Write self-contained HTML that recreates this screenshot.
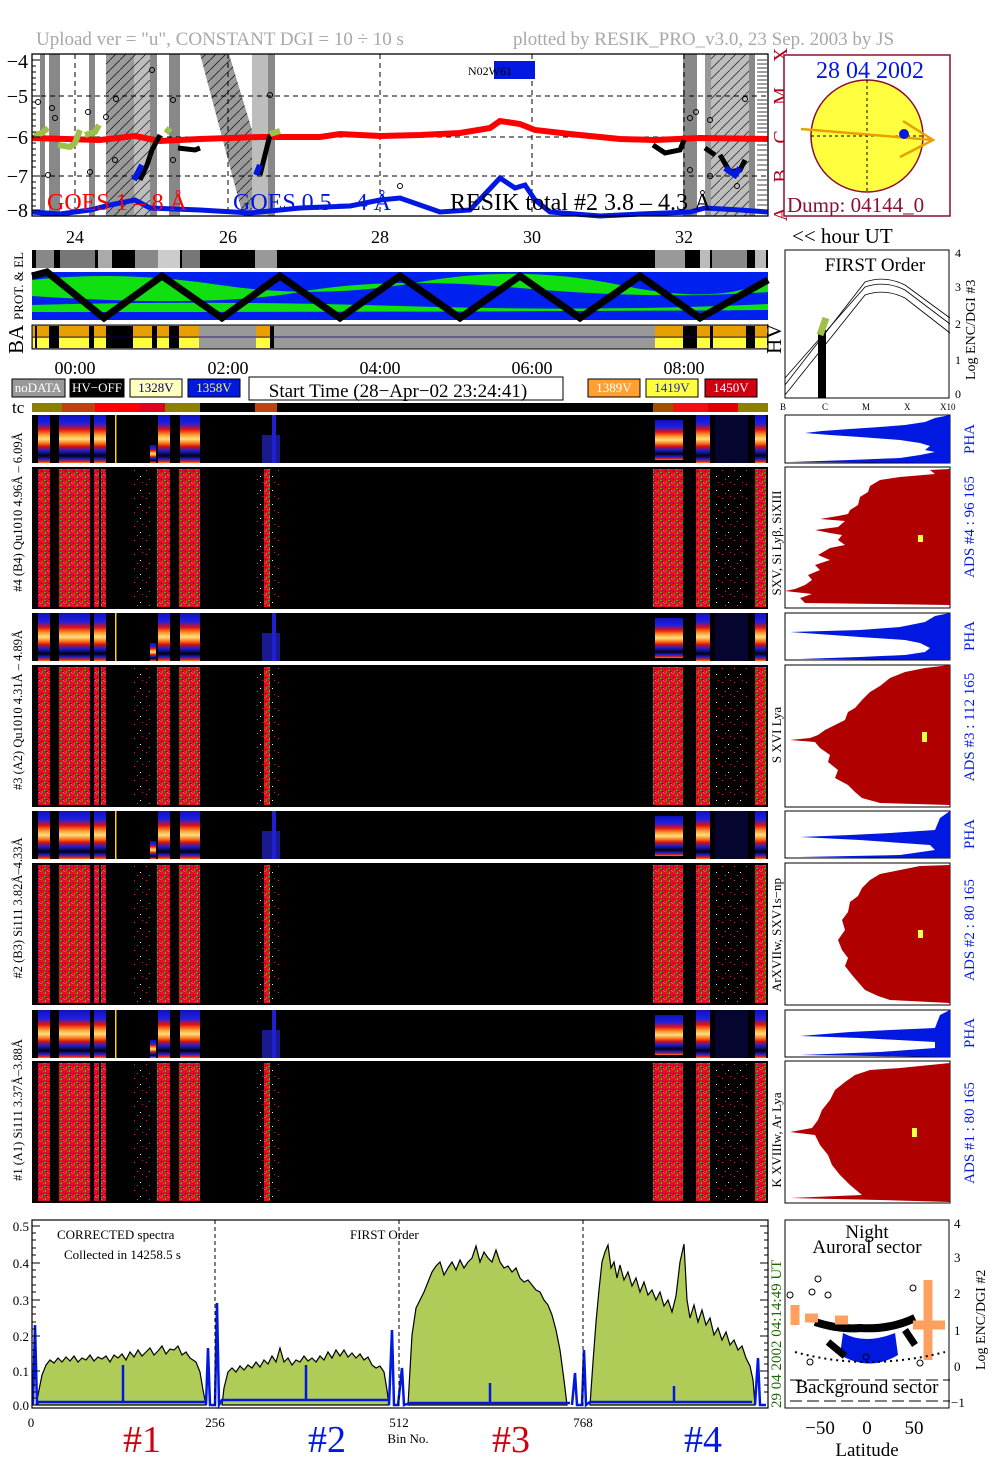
<!DOCTYPE html>
<html><head><meta charset="utf-8"><style>
html,body{margin:0;padding:0;background:#fff;}
svg{display:block;font-family:"Liberation Serif",serif;}
</style></head><body>
<svg width="1004" height="1477" viewBox="0 0 1004 1477" xmlns="http://www.w3.org/2000/svg">
<defs>
<pattern id="hatch" width="10" height="10" patternUnits="userSpaceOnUse"><rect width="10" height="10" fill="#bdbdbd"/><path d="M0 10L10 0" stroke="#333" stroke-width="0.8"/></pattern>
<pattern id="hatchw" width="10" height="10" patternUnits="userSpaceOnUse"><rect width="10" height="10" fill="#9a9a9a"/><path d="M0 10L10 0" stroke="#222" stroke-width="0.8"/></pattern>
<pattern id="spk" width="8" height="8" patternUnits="userSpaceOnUse"><rect width="8" height="8" fill="#e01020"/><rect x="0" y="0" width="2" height="1" fill="#10c010"/><rect x="5" y="1" width="1" height="2" fill="#20d020"/><rect x="3" y="2" width="2" height="1" fill="#e020a0"/><rect x="4" y="5" width="2" height="1" fill="#30b010"/><rect x="1" y="4" width="1" height="1" fill="#000"/><rect x="2" y="6" width="1" height="2" fill="#10c010"/><rect x="6" y="3" width="1" height="1" fill="#a000a0"/><rect x="7" y="7" width="1" height="1" fill="#ff60c0"/><rect x="0" y="6" width="1" height="1" fill="#c02080"/><rect x="6" y="6" width="1" height="1" fill="#000"/></pattern>
<pattern id="spks" width="12" height="14" patternUnits="userSpaceOnUse"><rect width="12" height="14" fill="#000"/><rect x="2" y="3" width="1" height="1" fill="#f02040"/><rect x="8" y="9" width="1" height="1" fill="#fff"/><rect x="5" y="12" width="1" height="1" fill="#e020a0"/><rect x="10" y="1" width="1" height="1" fill="#f01010"/></pattern>
<linearGradient id="pha" x1="0" y1="0" x2="0" y2="1">
<stop offset="0" stop-color="#1010c0"/><stop offset="0.18" stop-color="#2020e0"/><stop offset="0.3" stop-color="#e01010"/><stop offset="0.42" stop-color="#ffa030"/><stop offset="0.5" stop-color="#ffe080"/><stop offset="0.58" stop-color="#ff8020"/><stop offset="0.66" stop-color="#d01010"/><stop offset="0.74" stop-color="#2020d0"/><stop offset="0.85" stop-color="#000010"/><stop offset="0.92" stop-color="#2020d0"/><stop offset="0.97" stop-color="#e02010"/><stop offset="1" stop-color="#ff8020"/></linearGradient>
<g id="phag">
<rect x="32" y="0" width="736" height="48" fill="#000"/>
<rect x="38" y="0" width="12" height="48" fill="url(#pha)"/>
<rect x="59" y="0" width="31" height="48" fill="url(#pha)"/>
<rect x="94" y="0" width="12" height="48" fill="url(#pha)"/>
<rect x="150" y="30" width="6" height="18" fill="url(#pha)"/>
<rect x="158" y="0" width="12" height="48" fill="url(#pha)"/>
<rect x="180" y="0" width="20" height="48" fill="url(#pha)"/>
<rect x="115" y="0" width="1.5" height="48" fill="#ffd000"/>
<rect x="262" y="20" width="18" height="28" fill="#1a1a90"/>
<rect x="272" y="0" width="4" height="48" fill="#2020d0"/>
<rect x="655" y="5" width="28" height="40" fill="url(#pha)"/>
<rect x="696" y="0" width="14" height="48" fill="url(#pha)"/>
<rect x="715" y="0" width="33" height="48" fill="#050530"/>
<rect x="755" y="0" width="11" height="48" fill="url(#pha)"/>
</g>
<g id="bigg">
<rect x="32" y="0" width="736" height="142" fill="#000"/>
<rect x="38" y="2" width="12" height="138" fill="url(#spk)"/>
<rect x="59" y="2" width="31" height="138" fill="url(#spk)"/>
<rect x="94" y="2" width="5" height="138" fill="url(#spk)"/>
<rect x="101" y="2" width="5" height="138" fill="url(#spk)"/>
<rect x="132" y="2" width="20" height="138" fill="url(#spks)"/>
<rect x="157" y="2" width="13" height="138" fill="url(#spk)"/>
<rect x="179" y="2" width="21" height="138" fill="url(#spk)"/>
<rect x="255" y="2" width="25" height="138" fill="url(#spks)"/>
<rect x="264" y="2" width="6" height="138" fill="url(#spk)"/>
<rect x="653" y="2" width="30" height="138" fill="url(#spk)"/>
<rect x="696" y="2" width="14" height="138" fill="url(#spk)"/>
<rect x="715" y="2" width="33" height="138" fill="url(#spks)"/>
<rect x="755" y="2" width="11" height="138" fill="url(#spk)"/>
</g>
</defs>

<!-- Title -->
<text x="36" y="45" font-size="19" fill="#a8a8a8">Upload ver = "u", CONSTANT  DGI =  10 ÷  10 s</text>
<text x="513" y="45" font-size="19" fill="#a8a8a8">plotted by RESIK_PRO_v3.0, 23 Sep. 2003 by JS</text>

<!-- Top plot -->
<g>
<rect x="32" y="54" width="736" height="162" fill="#fff"/>
<rect x="40" y="54" width="5" height="162" fill="#888"/>
<rect x="49" y="54" width="11" height="162" fill="#888"/>
<rect x="89" y="54" width="6" height="162" fill="#888"/>
<rect x="106" y="54" width="29" height="162" fill="url(#hatchw)"/>
<rect x="134" y="54" width="16" height="162" fill="url(#hatch)"/>
<rect x="150" y="54" width="7" height="162" fill="#888"/>
<rect x="169" y="54" width="11" height="162" fill="#888"/>
<polygon points="200,54 229,54 255,140 255,216 243,216" fill="url(#hatchw)"/>
<rect x="252" y="54" width="16" height="162" fill="#bdbdbd"/>
<rect x="268" y="54" width="7" height="162" fill="#888"/>
<rect x="683" y="54" width="14" height="162" fill="#888"/>
<rect x="705" y="54" width="50" height="162" fill="url(#hatch)"/>
<rect x="705" y="54" width="6" height="162" fill="#999"/>
<rect x="749" y="54" width="6" height="162" fill="#888"/>
<rect x="755" y="54" width="12" height="162" fill="#fff"/>
<g stroke="#000" stroke-width="0.7"><path d="M757 60H767M757 64H767M757 68H767M757 72H767M757 76H767M757 80H767M757 84H767M757 88H767M757 92H767M757 100H767M757 104H767M757 108H767M757 112H767M757 116H767M757 120H767M757 124H767M757 128H767M757 132H767M757 145H767M757 150H767M757 155H767M757 160H767M757 165H767M757 170H767M757 180H767M757 185H767M757 190H767M757 195H767M757 200H767M757 205H767"/></g>
<g stroke="#000" stroke-width="1" stroke-dasharray="5,4" fill="none">
<path d="M32 96H768M32 137H768M32 176H768"/>
<path d="M75 54V216M228 54V216M380 54V216M532 54V216M684 54V216"/>
</g>
<path d="M32 138 L100 140 L135 136 L160 141 L200 139 L260 137 L320 137 L340 134 L380 136 L420 135 L460 133 L490 128 L500 121 L520 124 L535 130 L570 134 L620 139 L655 140 L700 138 L768 139" stroke="#f00" stroke-width="6" fill="none"/>
<path d="M32 212 L60 214 L90 210 L110 205 L135 200 L150 208 L200 210 L250 213 L300 208 L350 206 L380 200 L400 198 L420 205 L440 212 L470 210 L500 178 L515 188 L525 185 L535 200 L550 212 L600 216 L640 214 L690 212 L705 208 L740 210 L768 212" stroke="#0018e0" stroke-width="5" fill="none"/>
<path d="M140 180 L147 165 L152 150 L160 135 M260 175 L265 155 L270 135" stroke="#000" stroke-width="5" fill="none"/>
<path d="M134 180 L142 165 M256 175 L260 165" stroke="#0018e0" stroke-width="6" fill="none"/>
<path d="M178 148 L195 150 L200 148 M653 145 L665 153 L680 150 L684 140 M705 148 L715 155 M720 155 L730 172 L740 170 L745 160" stroke="#000" stroke-width="5" fill="none"/>
<path d="M725 168 L735 175 L740 168" stroke="#0018e0" stroke-width="6" fill="none"/>
<path d="M34 135 L42 133 L48 128 M58 145 L70 147 L75 143 L80 130 M85 135 L95 132 L99 125 M166 133 L170 128 M270 134 L280 131" stroke="#9dc04a" stroke-width="6" fill="none"/>
<g fill="none" stroke="#000" stroke-width="1"><circle cx="38" cy="102" r="2.5"/><circle cx="52" cy="108" r="2.5"/><circle cx="55" cy="118" r="2.5"/><circle cx="48" cy="175" r="2.5"/><circle cx="88" cy="112" r="2.5"/><circle cx="90" cy="172" r="2.5"/><circle cx="106" cy="117" r="2.5"/><circle cx="116" cy="99" r="2.5"/><circle cx="115" cy="160" r="2.5"/><circle cx="152" cy="70" r="2.5"/><circle cx="173" cy="100" r="2.5"/><circle cx="173" cy="160" r="2.5"/><circle cx="270" cy="95" r="2.5"/><circle cx="400" cy="186" r="2.5"/><circle cx="690" cy="118" r="2.5"/><circle cx="696" cy="112" r="2.5"/><circle cx="690" cy="170" r="2.5"/><circle cx="710" cy="120" r="2.5"/><circle cx="710" cy="176" r="2.5"/><circle cx="745" cy="99" r="2.5"/><circle cx="737" cy="186" r="2.5"/></g>
<rect x="494" y="61" width="41" height="18" fill="#0018e0"/>
<text x="468" y="75" font-size="12" fill="#000">N02W61</text>
<text x="47" y="210" font-size="24" fill="#f00">GOES 1 – 8 Å</text>
<text x="233" y="210" font-size="24" fill="#0018e0">GOES 0.5 – 4 Å</text>
<text x="450" y="210" font-size="24" fill="#000">RESIK total #2  3.8 – 4.3 Å</text>
<rect x="32" y="54" width="736" height="162" fill="none" stroke="#000" stroke-width="1.3"/>
<g stroke="#000" stroke-width="1"><path d="M32 60H40M32 96H40M32 137H40M32 176H40M32 210H40"/><path d="M32 66H36M32 72H36M32 78H36M32 84H36M32 90H36M32 102H36M32 108H36M32 114H36M32 120H36M32 126H36M32 132H36M32 143H36M32 149H36M32 155H36M32 161H36M32 167H36M32 182H36M32 188H36M32 194H36M32 200H36M32 206H36"/></g>
<g font-size="20" text-anchor="end"><text x="28" y="68">−4</text><text x="28" y="103">−5</text><text x="28" y="144">−6</text><text x="28" y="183">−7</text><text x="28" y="217">−8</text></g>
<g font-size="20" fill="#b00020" text-anchor="middle">
<text transform="translate(781,55) rotate(-90)" y="6">X</text>
<text transform="translate(781,96) rotate(-90)" y="6">M</text>
<text transform="translate(781,137) rotate(-90)" y="6">C</text>
<text transform="translate(781,176) rotate(-90)" y="6">B</text>
<text transform="translate(781,214) rotate(-90)" y="6">A</text>
</g>
<g font-size="18" text-anchor="middle"><text x="75" y="243">24</text><text x="228" y="243">26</text><text x="380" y="243">28</text><text x="532" y="243">30</text><text x="684" y="243">32</text></g>
</g>

<!-- Sun box -->
<rect x="784" y="55" width="166" height="161" fill="#fff" stroke="#8b1030" stroke-width="1.5"/>
<circle cx="867" cy="136" r="56" fill="#ffff40" stroke="#8b1030" stroke-width="1.5"/>
<path d="M867 80V192M811 136H930" stroke="#000" stroke-width="1" stroke-dasharray="3,3"/>
<path d="M801 129 L933 140 M903 121 L933 140 L900 157" stroke="#e8a000" stroke-width="2.5" fill="none"/>
<circle cx="904" cy="134" r="5" fill="#0018e0"/>
<text x="870" y="78" font-size="24" fill="#0018e0" text-anchor="middle">28 04 2002</text>
<text x="787" y="212" font-size="21" fill="#8b1030">Dump: 04144_0</text>
<text x="792" y="243" font-size="21">&lt;&lt; hour UT</text>

<!-- Strips -->
<rect x="32" y="250" width="736" height="18" fill="#000"/>
<rect x="36" y="250" width="18" height="18" fill="#888"/><rect x="60" y="250" width="35" height="18" fill="#777"/><rect x="98" y="250" width="14" height="18" fill="#aaa"/><rect x="135" y="250" width="28" height="18" fill="#888"/><rect x="158" y="250" width="22" height="18" fill="#ccc"/><rect x="182" y="250" width="18" height="18" fill="#777"/><rect x="255" y="250" width="22" height="18" fill="#999"/>
<rect x="655" y="250" width="30" height="18" fill="#999"/><rect x="700" y="250" width="10" height="18" fill="#bbb"/><rect x="712" y="250" width="35" height="18" fill="#888"/><rect x="755" y="250" width="11" height="18" fill="#bbb"/>
<rect x="32" y="272" width="736" height="48" fill="#0020f0"/>
<path d="M32 280 Q120 270 220 285 T420 282 T620 285 T768 280 V292 Q650 300 520 288 T300 292 T32 296Z" fill="#10e010"/>
<path d="M32 305 Q200 300 400 306 T768 304 V310 Q500 312 32 312Z" fill="#10e010"/>
<path d="M32 276 L47 272 L104 318 L162 276 L222 318 L280 276 L340 318 L400 276 L460 318 L520 276 L580 318 L640 276 L700 318 L768 280" stroke="#000" stroke-width="7" fill="none"/>
<rect x="32" y="325" width="736" height="24" fill="#999" stroke="#000" stroke-width="1"/>
<g>
<rect x="33" y="326" width="166" height="11" fill="#e8a000"/><rect x="33" y="338" width="166" height="10" fill="#ffff40"/>
<rect x="256" y="326" width="14" height="22" fill="#e8a000"/><rect x="256" y="338" width="14" height="10" fill="#ffff40"/>
<rect x="655" y="326" width="112" height="11" fill="#e8a000"/><rect x="655" y="338" width="112" height="10" fill="#ffff40"/>
<rect x="35" y="326" width="2" height="22" fill="#000"/><rect x="49" y="326" width="10" height="22" fill="#000"/><rect x="89" y="326" width="5" height="22" fill="#000"/><rect x="106" y="326" width="27" height="22" fill="#000"/><rect x="152" y="326" width="5" height="22" fill="#000"/><rect x="169" y="326" width="10" height="22" fill="#000"/><rect x="270" y="326" width="4" height="22" fill="#000"/>
<rect x="683" y="326" width="14" height="22" fill="#000"/><rect x="710" y="326" width="3" height="22" fill="#000"/><rect x="746" y="326" width="9" height="22" fill="#000"/>
<path d="M32 337H768" stroke="#000060" stroke-width="0.8"/>
</g>
<text transform="translate(23,320) rotate(-90)" font-size="13">PROT. &amp; EL</text>
<text transform="translate(23,354) rotate(-90)" font-size="21">BA</text>
<text transform="translate(781,354) rotate(-90)" font-size="21">HV</text>
<g font-size="18" text-anchor="middle"><text x="75" y="374">00:00</text><text x="228" y="374">02:00</text><text x="380" y="374">04:00</text><text x="532" y="374">06:00</text><text x="684" y="374">08:00</text></g>

<!-- Legend -->
<g font-size="13" text-anchor="middle">
<rect x="12" y="379" width="53" height="18" fill="#999" stroke="#000"/><text x="38" y="392" fill="#fff">noDATA</text>
<rect x="70" y="379" width="54" height="18" fill="#000" stroke="#000"/><text x="97" y="392" fill="#fff">HV−OFF</text>
<rect x="130" y="379" width="52" height="18" fill="#ffffc0" stroke="#000"/><text x="156" y="392" fill="#000060">1328V</text>
<rect x="188" y="379" width="52" height="18" fill="#0018e0" stroke="#000"/><text x="214" y="392" fill="#ffff40">1358V</text>
<rect x="249" y="377" width="314" height="23" fill="#fff" stroke="#000"/><text x="398" y="397" font-size="19">Start Time (28−Apr−02 23:24:41)</text>
<rect x="588" y="379" width="52" height="18" fill="#ffa030" stroke="#000"/><text x="614" y="392" fill="#fff">1389V</text>
<rect x="646" y="379" width="52" height="18" fill="#ffff40" stroke="#000"/><text x="672" y="392" fill="#2020c0">1419V</text>
<rect x="705" y="379" width="52" height="18" fill="#d00010" stroke="#000"/><text x="731" y="392" fill="#fff">1450V</text>
</g>
<text x="12" y="413" font-size="17">tc</text>
<rect x="32" y="403" width="736" height="9" fill="#000"/>
<rect x="32" y="403" width="30" height="9" fill="#8b8000"/><rect x="62" y="403" width="33" height="9" fill="#c04010"/><rect x="95" y="403" width="45" height="9" fill="#f00"/><rect x="140" y="403" width="25" height="9" fill="#e00020"/><rect x="165" y="403" width="35" height="9" fill="#8b8000"/><rect x="255" y="403" width="22" height="9" fill="#c04010"/>
<rect x="653" y="403" width="20" height="9" fill="#a05000"/><rect x="673" y="403" width="35" height="9" fill="#f01010"/><rect x="708" y="403" width="30" height="9" fill="#e00000"/><rect x="738" y="403" width="30" height="9" fill="#8b8000"/>

<!-- Spectrogram panels -->
<use href="#phag" transform="translate(0,415)"/>
<use href="#bigg" transform="translate(0,467)"/>
<use href="#phag" transform="translate(0,613)"/>
<use href="#bigg" transform="translate(0,665)"/>
<use href="#phag" transform="translate(0,811)"/>
<use href="#bigg" transform="translate(0,863)"/>
<use href="#phag" transform="translate(0,1010)"/>
<use href="#bigg" transform="translate(0,1061)"/>

<g font-size="12.5" text-anchor="middle">
<text transform="translate(22,512) rotate(-90)">#4 (B4) Qu1010 4.96Å – 6.09Å</text>
<text transform="translate(22,710) rotate(-90)">#3 (A2) Qu1010 4.31Å – 4.89Å</text>
<text transform="translate(22,908) rotate(-90)">#2 (B3) Si111 3.82Å–4.33Å</text>
<text transform="translate(22,1110) rotate(-90)">#1 (A1) Si111 3.37Å–3.88Å</text>
</g>

<!-- Right: first order panel -->
<rect x="785" y="250" width="164" height="148" fill="#fff" stroke="#000"/>
<text x="875" y="271" font-size="19" text-anchor="middle">FIRST Order</text>
<g fill="none" stroke="#000" stroke-width="0.8">
<path d="M785 385 L865 282 Q885 275 905 285 L950 318"/>
<path d="M785 378 L865 287 Q885 280 905 290 L950 324"/>
<path d="M785 395 L865 295 Q885 288 905 298 L950 333"/>
</g>
<path d="M822 330 L822 398" stroke="#000" stroke-width="8"/>
<path d="M820 335 L826 318" stroke="#9dc04a" stroke-width="7"/>
<g font-size="12"><text x="955" y="257">4</text><text x="955" y="291">3</text><text x="955" y="328">2</text><text x="955" y="364">1</text><text x="955" y="398">0</text></g>
<text transform="translate(975,380) rotate(-90)" font-size="14">Log ENC/DGI #3</text>
<g font-size="9"><text x="780" y="410">B</text><text x="822" y="410">C</text><text x="862" y="410">M</text><text x="904" y="410">X</text><text x="940" y="410">X10</text></g>

<!-- Right histograms -->
<g stroke="#000" stroke-width="1">
<rect x="785" y="415" width="165" height="48" fill="#fff"/>
<polygon points="950,415 935,418 925,422 905,425 880,427 850,429 822,431 805,433 830,435 860,437 900,440 920,443 930,446 925,450 935,452 920,455 900,458 850,460 790,462 950,463" fill="#0018e0" stroke="none"/>
<rect x="785" y="467" width="165" height="141" fill="#fff"/>
<polygon points="950,469 930,470 935,474 900,477 880,480 870,486 868,492 860,497 858,505 850,510 848,514 838,516 820,519 845,521 838,527 815,530 830,533 842,535 838,540 845,545 830,548 818,555 830,560 815,565 820,570 808,575 812,580 805,585 795,589 785,591 812,594 800,598 805,603 950,605" fill="#b00000" stroke="none"/>
<rect x="785" y="613" width="165" height="47" fill="#fff"/>
<polygon points="950,613 935,616 925,622 900,627 860,630 790,632 860,637 905,640 920,643 930,648 925,652 905,655 860,657 800,659 950,660" fill="#0018e0" stroke="none"/>
<rect x="785" y="665" width="165" height="142" fill="#fff"/>
<polygon points="950,665 925,668 905,672 890,678 880,686 870,692 862,700 855,708 848,712 845,720 835,725 825,730 818,735 810,738 790,740 815,742 820,748 830,755 828,762 838,770 835,778 848,785 855,792 862,798 880,803 950,805" fill="#b00000" stroke="none"/>
<rect x="785" y="811" width="165" height="47" fill="#fff"/>
<polygon points="950,811 940,818 935,830 890,833 850,835 800,837 860,840 930,845 935,850 900,855 800,857 950,858" fill="#0018e0" stroke="none"/>
<rect x="785" y="863" width="165" height="142" fill="#fff"/>
<polygon points="950,865 920,866 900,870 880,874 870,880 862,888 858,896 850,902 848,912 842,920 845,930 838,940 842,950 848,958 845,966 852,975 858,982 865,990 878,996 890,1000 950,1003" fill="#b00000" stroke="none"/>
<rect x="785" y="1010" width="165" height="47" fill="#fff"/>
<polygon points="950,1010 940,1015 935,1028 890,1030 850,1032 800,1036 860,1038 935,1042 935,1048 880,1052 800,1055 950,1057" fill="#0018e0" stroke="none"/>
<rect x="785" y="1061" width="165" height="142" fill="#fff"/>
<polygon points="950,1063 900,1068 870,1070 855,1075 845,1082 835,1090 830,1100 822,1110 818,1120 812,1128 790,1132 815,1135 820,1145 828,1155 832,1165 840,1175 850,1185 862,1195 790,1198 880,1200 950,1202" fill="#b00000" stroke="none"/>
</g>
<rect x="918" y="535" width="5" height="7" fill="#ffff40"/>
<rect x="922" y="732" width="5" height="10" fill="#ffff40"/>
<rect x="918" y="930" width="5" height="8" fill="#ffff40"/>
<rect x="912" y="1128" width="5" height="9" fill="#ffff40"/>
<g font-size="13" text-anchor="middle">
<text transform="translate(781,543) rotate(-90)">SXV, Si Lyβ, SiXIII</text>
<text transform="translate(781,735) rotate(-90)">S XVI Lya</text>
<text transform="translate(781,935) rotate(-90)">ArXVIIw, SXV1s−np</text>
<text transform="translate(781,1140) rotate(-90)">K XVIIIw, Ar Lya</text>
</g>
<g font-size="15" fill="#0018e0" text-anchor="middle">
<text transform="translate(974,439) rotate(-90)">PHA</text>
<text transform="translate(974,527) rotate(-90)">ADS #4 :   96 165</text>
<text transform="translate(974,636) rotate(-90)">PHA</text>
<text transform="translate(974,727) rotate(-90)">ADS #3 :  112 165</text>
<text transform="translate(974,834) rotate(-90)">PHA</text>
<text transform="translate(974,930) rotate(-90)">ADS #2 :   80 165</text>
<text transform="translate(974,1033) rotate(-90)">PHA</text>
<text transform="translate(974,1133) rotate(-90)">ADS #1 :   80 165</text>
</g>

<!-- Bottom spectrum -->
<rect x="32" y="1220" width="736" height="188" fill="#fff"/>
<g fill="#b0cc58" stroke="#000" stroke-width="1.2">
<path d="M36 1405 L38 1395 L42 1375 L46 1365 L50 1360 L54 1363 L58 1358 L62 1362 L66 1357 L70 1361 L74 1356 L78 1362 L82 1358 L86 1360 L90 1355 L94 1361 L98 1357 L102 1359 L106 1356 L110 1362 L114 1355 L118 1358 L122 1354 L126 1360 L130 1352 L134 1357 L138 1350 L142 1356 L146 1352 L150 1348 L154 1355 L158 1351 L162 1346 L166 1354 L170 1349 L174 1350 L178 1346 L182 1355 L186 1352 L190 1358 L196 1362 L200 1372 L203 1390 L206 1405Z"/>
<path d="M222 1405 L224 1388 L228 1372 L232 1368 L236 1372 L240 1366 L244 1370 L248 1365 L252 1368 L256 1362 L260 1367 L264 1360 L268 1364 L272 1356 L276 1362 L280 1348 L284 1362 L288 1358 L292 1365 L296 1360 L300 1362 L304 1356 L308 1361 L312 1358 L316 1362 L320 1356 L324 1360 L328 1352 L332 1358 L336 1350 L340 1356 L344 1350 L348 1357 L352 1353 L356 1358 L360 1354 L364 1360 L368 1357 L372 1365 L376 1368 L380 1366 L384 1372 L387 1390 L389 1405Z"/>
<path d="M408 1405 L410 1370 L412 1335 L416 1308 L420 1300 L424 1292 L428 1282 L432 1272 L436 1266 L440 1262 L444 1275 L448 1268 L452 1262 L456 1270 L460 1260 L464 1268 L468 1262 L472 1258 L476 1246 L480 1262 L484 1252 L488 1258 L492 1262 L496 1250 L500 1262 L504 1268 L508 1266 L512 1272 L516 1268 L520 1278 L524 1282 L528 1280 L532 1285 L536 1290 L540 1292 L544 1300 L548 1305 L552 1315 L556 1330 L560 1350 L564 1380 L567 1405Z"/>
<path d="M590 1405 L593 1362 L596 1322 L599 1290 L602 1262 L605 1252 L608 1245 L611 1268 L614 1262 L617 1278 L620 1265 L624 1280 L628 1272 L632 1286 L636 1278 L640 1292 L644 1282 L648 1295 L652 1290 L656 1300 L660 1292 L664 1306 L668 1300 L672 1312 L676 1296 L680 1262 L684 1244 L687 1300 L690 1318 L694 1305 L698 1322 L702 1310 L706 1325 L710 1318 L714 1335 L718 1328 L722 1340 L726 1332 L730 1345 L734 1340 L738 1350 L742 1346 L746 1358 L750 1366 L753 1380 L755 1405Z"/>
</g>
<g stroke="#0018e0" stroke-width="2.5" fill="none">
<path d="M33 1405 L35 1325 L37 1405 L38 1402 L205 1402 M123 1402 V1365 M206 1405 L208 1348 L210 1405 L215 1405 L217 1303 L219 1405 L222 1400 L388 1400 M306 1400 V1365 M389 1405 L392 1330 L394 1405 L398 1405 L402 1368 L404 1405 L410 1403 L570 1403 M490 1403 V1383 M572 1405 L575 1373 L577 1405 L582 1405 L584 1350 L586 1405 L590 1402 L752 1402 M674 1402 V1386 M755 1405 L758 1358 L760 1405 L766 1405"/>
</g>
<path d="M215 1220V1408M399 1220V1408M583 1220V1408" stroke="#000" stroke-dasharray="4,3" stroke-width="1"/>
<rect x="32" y="1220" width="736" height="188" fill="none" stroke="#000" stroke-width="1.2"/>
<g stroke="#000" stroke-width="1"><path d="M32 1226H40M32 1263H40M32 1300H40M32 1336H40M32 1371H40M32 1405H40"/><path d="M32 1233H36M32 1240H36M32 1248H36M32 1255H36M32 1270H36M32 1277H36M32 1285H36M32 1292H36M32 1307H36M32 1314H36M32 1322H36M32 1329H36M32 1343H36M32 1350H36M32 1357H36M32 1364H36M32 1378H36M32 1385H36M32 1392H36M32 1398H36"/>
<path d="M760 1226H768M760 1263H768M760 1300H768M760 1336H768M760 1371H768M764 1233H768M764 1240H768M764 1248H768M764 1255H768M764 1270H768M764 1277H768M764 1285H768M764 1292H768M764 1307H768M764 1314H768M764 1322H768M764 1329H768M764 1343H768M764 1350H768M764 1357H768M764 1364H768M764 1378H768M764 1385H768M764 1392H768"/></g>
<g font-size="13" text-anchor="end"><text x="29" y="1231">0.5</text><text x="29" y="1268">0.4</text><text x="29" y="1305">0.3</text><text x="29" y="1341">0.2</text><text x="29" y="1376">0.1</text><text x="29" y="1410">0.0</text></g>
<text x="57" y="1239" font-size="13">CORRECTED spectra</text>
<text x="64" y="1259" font-size="13">Collected in 14258.5 s</text>
<text x="350" y="1239" font-size="13">FIRST Order</text>
<g font-size="13" text-anchor="middle"><text x="31" y="1427">0</text><text x="215" y="1427">256</text><text x="399" y="1427">512</text><text x="583" y="1427">768</text><text x="408" y="1443">Bin No.</text></g>
<g font-size="38" text-anchor="middle"><text x="142" y="1452" fill="#d00010">#1</text><text x="327" y="1452" fill="#0018e0">#2</text><text x="511" y="1452" fill="#d00010">#3</text><text x="703" y="1452" fill="#0018e0">#4</text></g>
<text transform="translate(781,1408) rotate(-90)" font-size="15" fill="#1a6b00">29 04 2002    04:14:49 UT</text>

<!-- Latitude panel -->
<rect x="785" y="1220" width="164" height="188" fill="#fff" stroke="#000"/>
<text x="867" y="1238" font-size="19" text-anchor="middle">Night</text>
<text x="867" y="1253" font-size="19" text-anchor="middle">Auroral sector</text>
<path d="M790 1380H950M790 1401H950" stroke="#000" stroke-dasharray="12,5"/>
<path d="M843 1333 Q865 1345 895 1333 L898 1355 Q870 1372 840 1355Z" fill="#0018e0"/>
<path d="M815 1322 Q840 1330 860 1328 Q890 1330 915 1318" stroke="#000" stroke-width="8" fill="none"/>
<path d="M828 1342 L845 1356 M905 1330 L915 1345" stroke="#000" stroke-width="7"/>
<path d="M795 1305 L795 1325 M805 1318 H818 M835 1320 H848 M928 1280 V1360 M913 1325 H945" stroke="#ffa060" stroke-width="9"/>
<path d="M795 1352 Q867 1372 945 1352" stroke="#000" stroke-dasharray="2,4" stroke-width="2" fill="none"/>
<g fill="none" stroke="#000"><circle cx="818" cy="1279" r="3"/><circle cx="812" cy="1292" r="3"/><circle cx="790" cy="1295" r="3"/><circle cx="828" cy="1295" r="3"/><circle cx="913" cy="1288" r="3"/><circle cx="810" cy="1362" r="3"/><circle cx="920" cy="1363" r="3"/><circle cx="866" cy="1357" r="3"/></g>
<text x="867" y="1393" font-size="19" text-anchor="middle">Background sector</text>
<g font-size="13"><text x="954" y="1228">4</text><text x="954" y="1262">3</text><text x="954" y="1298">2</text><text x="954" y="1335">1</text><text x="954" y="1371">0</text><text x="951" y="1407">−1</text></g>
<text transform="translate(985,1370) rotate(-90)" font-size="14">Log ENC/DGI #2</text>
<g font-size="19" text-anchor="middle"><text x="820" y="1434">−50</text><text x="867" y="1434">0</text><text x="914" y="1434">50</text><text x="867" y="1456">Latitude</text></g>
</svg>
</body></html>
